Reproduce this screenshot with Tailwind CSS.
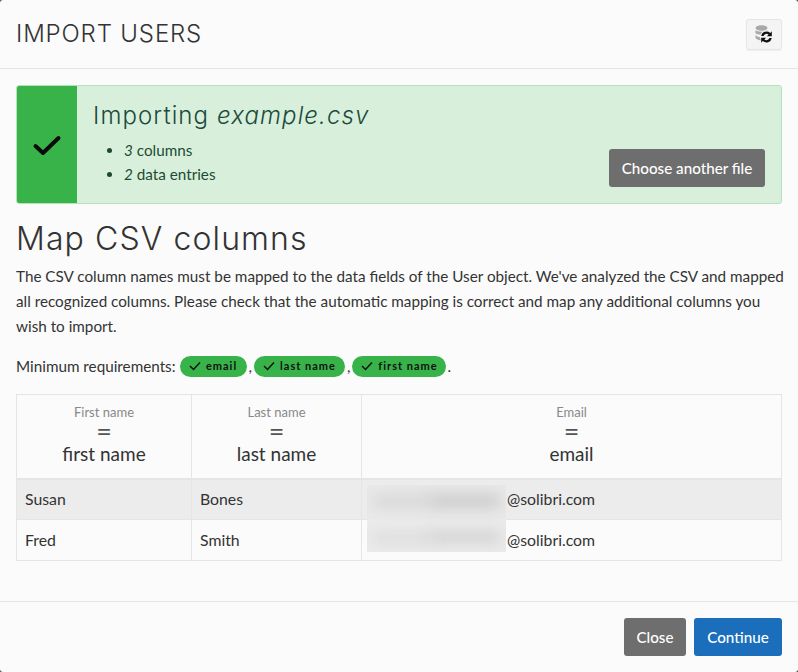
<!DOCTYPE html>
<html lang="en">
  <head>
    <meta charset="UTF-8" />
    <meta name="viewport" content="width=device-width, initial-scale=1.0" />
    <title>Import users</title>
    <script src="https://cdn.jsdelivr.net/npm/@tailwindcss/browser@4"></script>
  </head>
  <body class="bg-[#33475b]">
    <div class="w-[798px] h-[672px] bg-[#fbfbfb] rounded-[3px] flex flex-col text-[#333] font-['Lato','Noto_Sans',sans-serif] text-[15.250px]">
      <!-- header -->
      <div class="h-[69px] border-b border-[#e5e5e5] pl-4 pr-4 flex items-center justify-between shrink-0">
        <h2 class="font-['Inter',sans-serif] text-[24px] font-light tracking-[0.850px] text-[#333]">IMPORT USERS</h2>
        <button class="w-[36px] h-[31px] bg-[#f4f4f4] border border-[#e6e6e6] rounded-[3px] flex items-center justify-center shadow-[0_1px_1px_rgba(0,0,0,0.05)]">
          <svg width="18" height="19" viewBox="0 0 18 19">
            <ellipse cx="6.500" cy="3" rx="6" ry="2.800" fill="#a8a8a8" />
            <path d="M.5 5c1.200 2.300 10.800 2.300 12 0v3c-1.200 2.300-10.800 2.300-12 0zM.5 10c1 1.700 4 2.200 6 2.300v3c-2-.1-5-.6-6-2.300z" fill="#a8a8a8" />
            <circle cx="11.500" cy="12" r="6.500" fill="#f4f4f4" />
            <path d="M6.200 11a5.400 5.400 0 0 1 9-3.100L16.800 6.300v5h-5l1.800-1.800a3.200 3.200 0 0 0-5 1.500zM16.800 13a5.400 5.400 0 0 1-9 3.100l-1.600 1.600v-5h5l-1.800 1.800a3.200 3.200 0 0 0 5-1.500z" fill="#111" />
          </svg>
        </button>
      </div>

      <div class="flex-1 px-4 pt-4">
        <!-- file status -->
        <div class="h-[119px] flex border border-[#b5e2bc] rounded-[3px] bg-[#d8f0db] overflow-hidden">
          <div class="w-[60px] shrink-0 bg-[#37b34a] flex items-center justify-center">
            <svg width="30" height="24" viewBox="0 0 30 24" fill="none">
              <path d="M3.500 13l7.500 7L26.500 5" stroke="#0a0a0a" stroke-width="4" stroke-linecap="round" stroke-linejoin="round" />
            </svg>
          </div>
          <div class="flex-1 flex justify-between pl-4 pr-4 text-[#1d4a33]">
            <div class="pt-[14px]">
              <h3 class="font-['Inter',sans-serif] text-[24px] font-light leading-[32px] tracking-[1.100px] text-[#1c4a3c]">Importing <em>example.csv</em></h3>
              <ul class="list-disc pl-[31px] mt-[6px] leading-6 marker:text-[#1d4a33]">
                <li><em>3</em> columns</li>
                <li><em>2</em> data entries</li>
              </ul>
            </div>
            <button class="self-end mb-[16px] w-[156px] h-[38px] bg-[#6e6e6e] rounded-[3px] text-white text-[15.200px] font-medium">Choose another file</button>
          </div>
        </div>

        <h2 class="font-['Inter',sans-serif] font-light text-[32px] leading-10 tracking-[1.100px] mt-[15px] text-[#333]">Map CSV columns</h2>
        <p class="mt-[5px] leading-[25px] w-[770px]">The CSV column names must be mapped to the data fields of the User object. We've analyzed the CSV and mapped all recognized columns. Please check that the automatic mapping is correct and map any additional columns you wish to import.</p>

        <p class="mt-[16px] h-[22px] flex items-center">
          <span class="mr-[4px]">Minimum requirements:</span>
          <span class="h-[21px] w-[67px] bg-[#37b34a] rounded-full text-[#111] text-[11px] font-bold tracking-[1px] flex items-center justify-center gap-[5px]">
            <svg width="12" height="10" viewBox="0 0 12 10" fill="none"><path d="M1 5l3.500 3.500L11 1.500" stroke="#111" stroke-width="1.500" /></svg>email</span>
          <span class="mx-[2px]">,</span>
          <span class="h-[21px] w-[91px] bg-[#37b34a] rounded-full text-[#111] text-[11px] font-bold tracking-[1px] flex items-center justify-center gap-[5px]">
            <svg width="12" height="10" viewBox="0 0 12 10" fill="none"><path d="M1 5l3.500 3.500L11 1.500" stroke="#111" stroke-width="1.500" /></svg>last name</span>
          <span class="mx-[2px]">,</span>
          <span class="h-[21px] w-[94px] bg-[#37b34a] rounded-full text-[#111] text-[11px] font-bold tracking-[1px] flex items-center justify-center gap-[5px]">
            <svg width="12" height="10" viewBox="0 0 12 10" fill="none"><path d="M1 5l3.500 3.500L11 1.500" stroke="#111" stroke-width="1.500" /></svg>first name</span>
          <span class="ml-px">.</span>
        </p>

        <!-- mapping table -->
        <div class="relative mt-[17px]">
          <table class="w-[766px] table-fixed border-collapse border border-[#e5e5e5]">
            <colgroup>
              <col class="w-[175px]" />
              <col class="w-[170px]" />
              <col />
            </colgroup>
            <thead>
              <tr class="h-[84px] border-b-2 border-[#e5e5e5] text-center font-normal">
                <th class="border-r border-[#e5e5e5] font-normal pb-[2px]">
                  <div class="text-[13px] leading-4 text-[#888]">First name</div>
                  <div class="text-[27px] leading-[22px] text-[#555]">=</div>
                  <div class="text-[19px] leading-6">first name</div>
                </th>
                <th class="border-r border-[#e5e5e5] font-normal pb-[2px]">
                  <div class="text-[13px] leading-4 text-[#888]">Last name</div>
                  <div class="text-[27px] leading-[22px] text-[#555]">=</div>
                  <div class="text-[19px] leading-6">last name</div>
                </th>
                <th class="font-normal pb-[2px]">
                  <div class="text-[13px] leading-4 text-[#888]">Email</div>
                  <div class="text-[27px] leading-[22px] text-[#555]">=</div>
                  <div class="text-[19px] leading-6">email</div>
                </th>
              </tr>
            </thead>
            <tbody class="text-[15.800px]">
              <tr class="h-[41px] bg-[#ececec] border-b border-[#e5e5e5]">
                <td class="pl-2 border-r border-[#e5e5e5]">Susan</td>
                <td class="pl-2 border-r border-[#e5e5e5]">Bones</td>
                <td class="pl-[145px]">@solibri.com</td>
              </tr>
              <tr class="h-[41px]">
                <td class="pl-2 border-r border-[#e5e5e5]">Fred</td>
                <td class="pl-2 border-r border-[#e5e5e5]">Smith</td>
                <td class="pl-[145px]">@solibri.com</td>
              </tr>
            </tbody>
          </table>
          <!-- redacted addresses -->
          <div class="absolute left-[351px] top-[91px] w-[139px] h-[67px] bg-[#e9e9e9] overflow-hidden">
            <div class="absolute inset-x-0 top-[34px] bottom-0 bg-[#ebebeb]"></div>
            <div class="absolute left-[6px] w-[60px] top-[10px] h-[12px] bg-[#d6d6d6] blur-[7px]"></div>
            <div class="absolute right-[6px] w-[70px] top-[9px] h-[14px] bg-[#cccccc] blur-[7px]"></div>
            <div class="absolute left-[6px] w-[60px] top-[48px] h-[10px] bg-[#dadada] blur-[7px]"></div>
            <div class="absolute right-[6px] w-[70px] top-[46px] h-[12px] bg-[#d2d2d2] blur-[7px]"></div>
          </div>
        </div>
      </div>

      <!-- footer -->
      <div class="h-[71px] border-t border-[#e5e5e5] shrink-0 px-4 flex items-center justify-end gap-2">
        <button class="w-[62px] h-[38px] bg-[#6e6e6e] rounded-[3px] text-white text-[15.200px] font-medium">Close</button>
        <button class="w-[88px] h-[38px] bg-[#1b6ebb] rounded-[3px] text-white text-[15.200px] font-medium">Continue</button>
      </div>
    </div>
  </body>
</html>
